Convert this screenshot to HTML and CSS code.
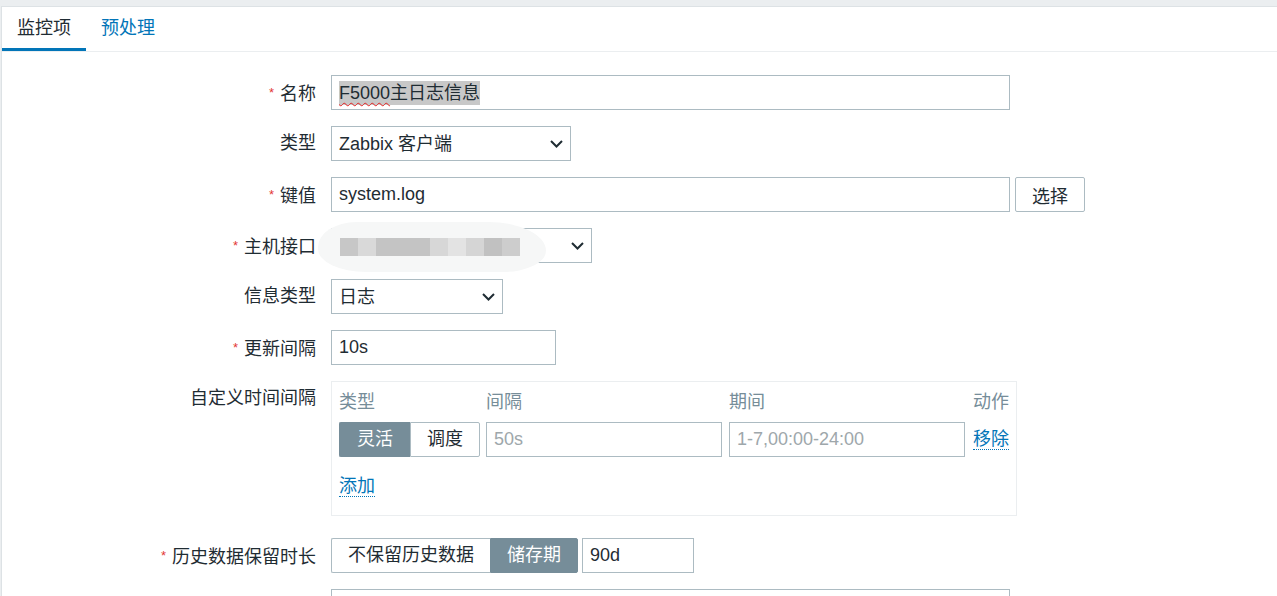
FILE: index.html
```html
<!DOCTYPE html>
<html lang="zh-CN">
<head>
  <meta charset="UTF-8" />
  <title>监控项</title>
  <link rel="stylesheet" href="styles.css">
</head>
<body>
  <div class="page">
    <div class="tabs">
      <a class="tab active">监控项</a>
      <a class="tab">预处理</a>
    </div>

    <div class="form">
      <div class="row">
        <label class="label required">名称</label>
        <div class="field">
          <div class="input w-wide"><span class="selected"><span class="typo">F5000</span>主日志信息</span></div>
        </div>
      </div>

      <div class="row">
        <label class="label">类型</label>
        <div class="field">
          <div class="select w-type">Zabbix 客户端
            <svg class="chev" width="13" height="8" viewBox="0 0 13 8"><polyline points="1,1 6.5,6.5 12,1" fill="none" stroke="#1f2c33" stroke-width="2"/></svg>
          </div>
        </div>
      </div>

      <div class="row">
        <label class="label required">键值</label>
        <div class="field">
          <input class="input w-wide" value="system.log">
          <button class="btn">选择</button>
        </div>
      </div>

      <div class="row">
        <label class="label required">主机接口</label>
        <div class="field">
          <div class="select w-iface">
            <svg class="chev" width="13" height="8" viewBox="0 0 13 8"><polyline points="1,1 6.5,6.5 12,1" fill="none" stroke="#1f2c33" stroke-width="2"/></svg>
          </div>
          <div class="blur">
            <span class="px" style="width:18px;background:#c7c7c7"></span>
            <span class="px" style="width:18px;background:#d9d9d9"></span>
            <span class="px" style="width:54px;background:#c4c4c4"></span>
            <span class="px" style="width:18px;background:#d7d7d7"></span>
            <span class="px" style="width:18px;background:#e3e3e3"></span>
            <span class="px" style="width:18px;background:#d5d5d5"></span>
            <span class="px" style="width:18px;background:#c1c1c1"></span>
            <span class="px" style="width:18px;background:#cdcdcd"></span>
          </div>
        </div>
      </div>

      <div class="row">
        <label class="label">信息类型</label>
        <div class="field">
          <div class="select w-info">日志
            <svg class="chev" width="13" height="8" viewBox="0 0 13 8"><polyline points="1,1 6.5,6.5 12,1" fill="none" stroke="#1f2c33" stroke-width="2"/></svg>
          </div>
        </div>
      </div>

      <div class="row">
        <label class="label required">更新间隔</label>
        <div class="field">
          <input class="input w-delay" value="10s">
        </div>
      </div>

      <div class="row row-table">
        <label class="label">自定义时间间隔</label>
        <div class="field">
          <div class="intervals">
            <div class="iv-head">
              <span class="c-type">类型</span>
              <span class="c-delay">间隔</span>
              <span class="c-period">期间</span>
              <span class="c-action">动作</span>
            </div>
            <div class="iv-row">
              <div class="seg c-type">
                <span class="seg-item on">灵活</span>
                <span class="seg-item">调度</span>
              </div>
              <input class="input c-delay" placeholder="50s">
              <input class="input c-period" placeholder="1-7,00:00-24:00">
              <span class="c-action"><a class="link">移除</a></span>
            </div>
            <div class="iv-add"><a class="link">添加</a></div>
          </div>
        </div>
      </div>

      <div class="row">
        <label class="label required">历史数据保留时长</label>
        <div class="field">
          <div class="seg">
            <span class="seg-item">不保留历史数据</span>
            <span class="seg-item on">储存期</span>
          </div>
          <input class="input w-hist" value="90d">
        </div>
      </div>

      <div class="row">
        <label class="label"></label>
        <div class="field">
          <input class="input w-wide">
        </div>
      </div>
    </div>
  </div>
</body>
</html>
```

FILE: styles.css
```css
html, body {
  margin: 0;
  padding: 0;
}
body {
  background: #ebeef0;
  padding: 6px 0 0 1px;
  font-family: "Liberation Sans", "Noto Sans CJK SC", sans-serif;
  font-size: 18px;
  color: #1f2c33;
  overflow: hidden;
}

.page {
  background: #fff;
  border-top: 1px solid #dde2e5;
  border-left: 1px solid #dde2e5;
  min-height: 600px;
}

.tabs {
  display: flex;
  border-bottom: 1px solid #ebeef0;
}
.tab {
  padding: 2px 15px 0;
  height: 39px;
  line-height: 39px;
  border-bottom: 3px solid transparent;
  color: #0275b8;
  cursor: pointer;
}
.tab.active {
  color: #1f2c33;
  border-bottom-color: #0275b8;
}

.form {
  padding-top: 23px;
}
.row {
  display: grid;
  grid-template-columns: 314px auto;
  grid-template-rows: 35px;
  column-gap: 15px;
  margin-bottom: 16px;
}
.row-table {
  grid-template-rows: auto;
  margin-bottom: 22px;
}
.label {
  text-align: right;
  height: 35px;
  line-height: 35px;
  white-space: nowrap;
  overflow: hidden;
}
.required::before {
  content: "*";
  color: #e33734;
  font-size: 13px;
  vertical-align: 3px;
  margin-right: 6px;
}
.field {
  display: flex;
  align-items: flex-start;
  gap: 5px;
  position: relative;
}

.input {
  box-sizing: border-box;
  height: 35px;
  border: 1px solid #acbbc2;
  background: #fff;
  padding: 0 7px;
  font: inherit;
  color: #1f2c33;
  line-height: 34px;
  outline: none;
  margin: 0;
  overflow: hidden;
  white-space: nowrap;
}
.input::placeholder {
  color: #9ea7ab;
}
.w-wide { width: 679px; }
.w-delay { width: 225px; }
.w-hist { width: 112px; margin-left: -1px; }

.selected {
  background: #c8c8c8;
  padding: 2px 0;
}
.typo {
  text-decoration: underline wavy #e02020;
  text-decoration-thickness: 1px;
  text-underline-offset: 3px;
}

.select {
  box-sizing: border-box;
  height: 35px;
  border: 1px solid #acbbc2;
  padding: 0 7px;
  line-height: 34px;
  position: relative;
  white-space: nowrap;
}
.select .chev {
  position: absolute;
  right: 7px;
  top: 13px;
}
.w-type { width: 240px; }
.w-iface { width: 261px; }
.w-info { width: 172px; }

.blur {
  position: absolute;
  left: -13px;
  top: -6px;
  width: 228px;
  height: 50px;
  background: #f6f7f7;
  border-radius: 40px 60px 45px 50px / 26px 30px 22px 24px;
  display: flex;
  align-items: center;
  padding-left: 22px;
  box-sizing: border-box;
}
.px {
  display: inline-block;
  height: 18px;
}

.btn {
  box-sizing: border-box;
  height: 35px;
  padding: 0 16px;
  border: 1px solid #acbbc2;
  border-radius: 2px;
  background: #fff;
  font: inherit;
  color: #1f2c33;
  cursor: pointer;
}

.intervals {
  box-sizing: border-box;
  width: 686px;
  border: 1px solid #ebeef0;
  padding: 5px 7px 14px;
}
.iv-head,
.iv-row {
  display: flex;
  align-items: center;
}
.c-type { width: 141px; flex: none; }
.c-delay { width: 236px; flex: none; margin-left: 6px; }
.c-period { width: 236px; flex: none; margin-left: 7px; }
.c-action { margin-left: 8px; white-space: nowrap; }

.iv-head {
  height: 30px;
  line-height: 30px;
  color: #768d99;
  margin-bottom: 5px;
}
.iv-row {
  height: 35px;
}
.iv-row .seg-item:first-child { width: 71px; }
.iv-row .seg-item:last-child { width: 70px; }
.iv-add {
  margin-top: 14px;
  height: 30px;
  line-height: 30px;
}

.link {
  color: #0275b8;
  text-decoration: none;
  border-bottom: 1px dotted #0275b8;
  cursor: pointer;
  line-height: 20px;
}

.seg {
  display: flex;
}
.seg-item {
  box-sizing: border-box;
  height: 35px;
  line-height: 33px;
  padding: 0 16px;
  border: 1px solid #acbbc2;
  background: #fff;
  white-space: nowrap;
  text-align: center;
}
.seg-item:first-child {
  border-radius: 2px 0 0 2px;
  border-right: none;
}
.seg-item:last-child {
  border-radius: 0 2px 2px 0;
}
.seg-item.on {
  background: #768d99;
  border-color: #768d99;
  color: #fff;
}
```
